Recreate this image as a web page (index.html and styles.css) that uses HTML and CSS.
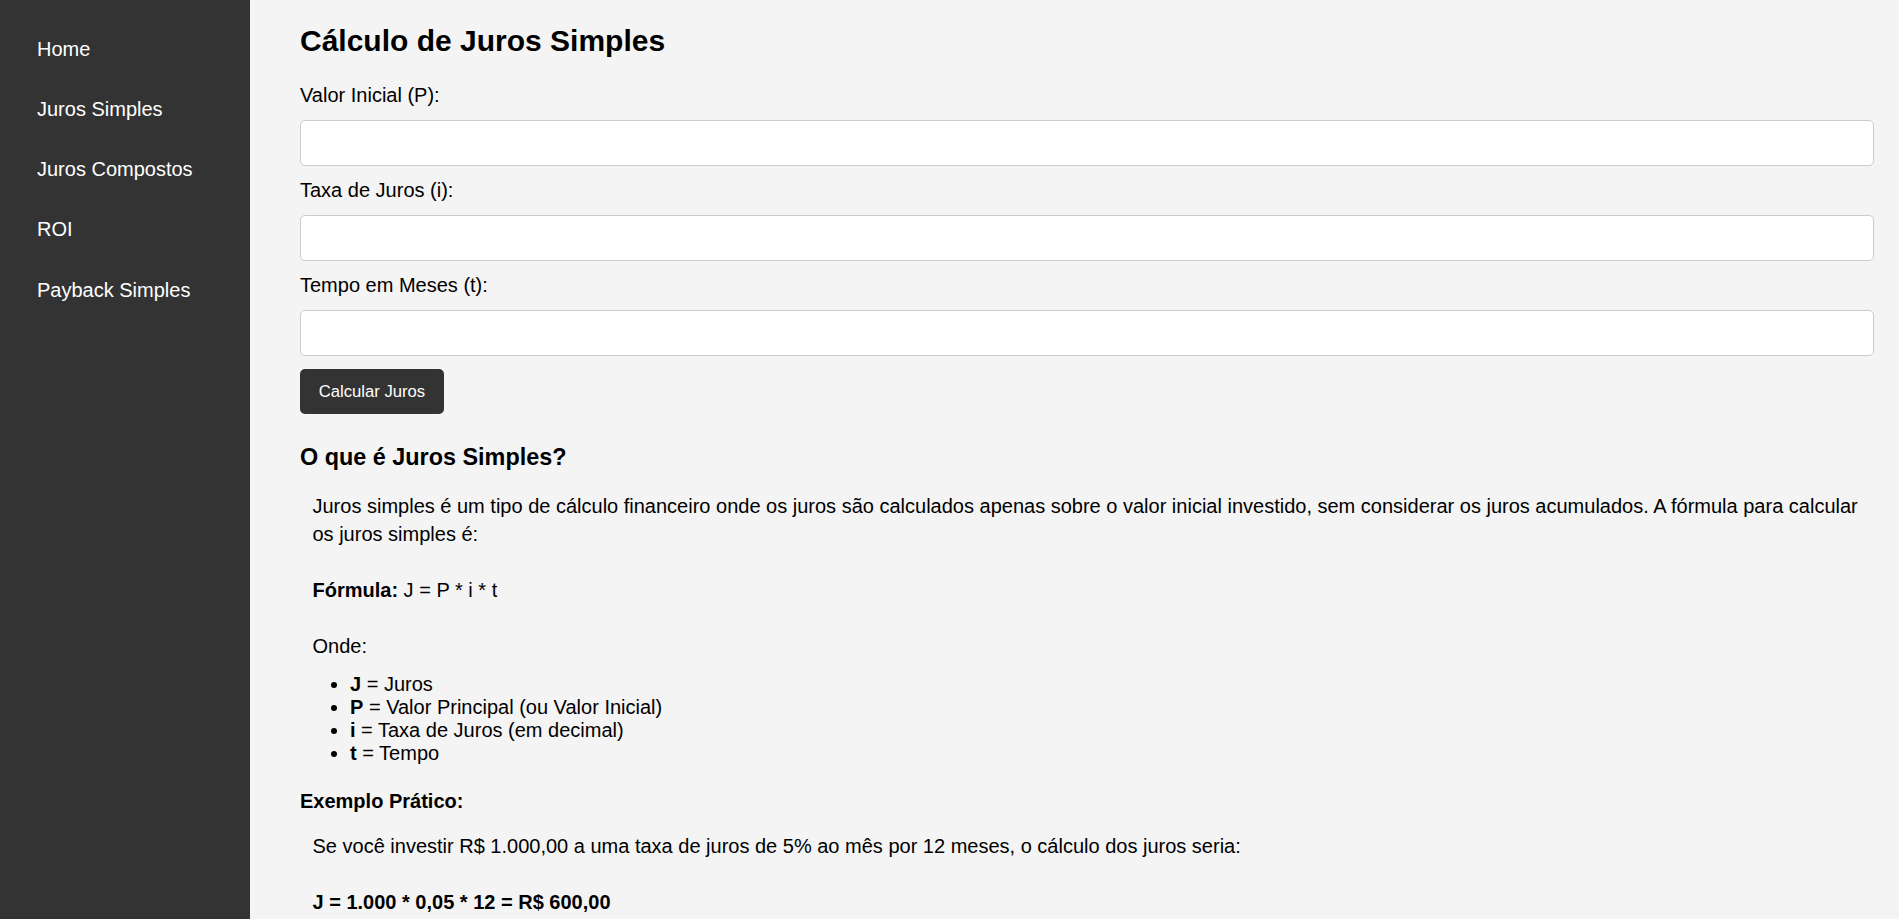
FILE: index.html
```html
<!DOCTYPE html>
<html lang="pt-BR">
<head>
<meta charset="UTF-8">
<title>Cálculo de Juros Simples</title>
<link rel="stylesheet" href="styles.css">
</head>
<body>
<nav class="sidebar">
  <ul class="nav-list">
    <li class="nav-item"><a class="nav-link" href="#">Home</a></li>
    <li class="nav-item"><a class="nav-link" href="#">Juros Simples</a></li>
    <li class="nav-item"><a class="nav-link" href="#">Juros Compostos</a></li>
    <li class="nav-item"><a class="nav-link" href="#">ROI</a></li>
    <li class="nav-item"><a class="nav-link" href="#">Payback Simples</a></li>
  </ul>
</nav>
<main class="content">
  <h1 class="title">Cálculo de Juros Simples</h1>
  <form class="calc-form">
    <label class="field-label" for="valor">Valor Inicial (P):</label>
    <input class="field-input" id="valor" type="number">
    <label class="field-label" for="taxa">Taxa de Juros (i):</label>
    <input class="field-input" id="taxa" type="number">
    <label class="field-label" for="tempo">Tempo em Meses (t):</label>
    <input class="field-input" id="tempo" type="number">
    <button class="calc-btn" type="button">Calcular Juros</button>
  </form>
  <section class="explain">
    <h3 class="explain-title">O que é Juros Simples?</h3>
    <p class="explain-text">Juros simples é um tipo de cálculo financeiro onde os juros são calculados apenas sobre o valor inicial investido, sem considerar os juros acumulados. A fórmula para calcular os juros simples é:<br><br><strong>Fórmula:</strong> J = P * i * t<br><br>Onde:</p>
    <ul class="explain-list">
      <li><strong>J</strong> = Juros</li>
      <li><strong>P</strong> = Valor Principal (ou Valor Inicial)</li>
      <li><strong>i</strong> = Taxa de Juros (em decimal)</li>
      <li><strong>t</strong> = Tempo</li>
    </ul>
    <h4 class="explain-sub">Exemplo Prático:</h4>
    <p class="explain-text">Se você investir R$ 1.000,00 a uma taxa de juros de 5% ao mês por 12 meses, o cálculo dos juros seria:<br><br><strong>J = 1.000 * 0,05 * 12 = R$ 600,00</strong></p>
  </section>
</main>
</body>
</html>
```

FILE: styles.css
```css
html, body {
  margin: 0;
  padding: 0;
}

body {
  display: flex;
  min-height: 100vh;
  font-family: "Liberation Sans", Arial, sans-serif;
  background-color: #f4f4f4;
  color: #000;
}

.sidebar {
  flex: 0 0 250px;
  width: 250px;
  background-color: #333;
  padding: 25px 25px 0 25px;
  box-sizing: border-box;
}

.nav-list {
  list-style: none;
  margin: 0;
  padding: 0;
}

.nav-item {
  margin: 0 0 12.25px 0;
}

.nav-link {
  display: block;
  padding: 12.5px 12px;
  color: #fff;
  text-decoration: none;
  font-size: 20px;
  line-height: 23px;
}

.content {
  flex: 1 1 auto;
  min-width: 0;
  padding: 24px 25px 0 50px;
}

.title {
  margin: 0 0 25px 0;
  font-size: 30px;
  line-height: 34.5px;
  font-weight: bold;
}

.calc-form {
  margin: 0;
}

.field-label {
  display: block;
  font-size: 20px;
  line-height: 23px;
  margin-bottom: 13px;
}

.field-input {
  display: block;
  width: 100%;
  height: 46px;
  box-sizing: border-box;
  margin: 0 0 13.3px 0;
  padding: 0 12.5px;
  border: 1px solid #ccc;
  border-radius: 5px;
  background-color: #fff;
  font-family: "Liberation Sans", Arial, sans-serif;
  font-size: 20px;
}

.calc-btn {
  display: block;
  padding: 12.5px 18.75px;
  border: none;
  border-radius: 5px;
  background-color: #333;
  color: #fff;
  font-family: "Liberation Sans", Arial, sans-serif;
  font-size: 16.67px;
  line-height: 19.2px;
  cursor: pointer;
}

.explain-title {
  margin: 30.5px 0 21px 0;
  font-size: 23.4px;
  line-height: 27px;
  font-weight: bold;
}

.explain-text {
  margin: 0;
  padding-left: 12.5px;
  font-size: 20px;
  line-height: 28px;
}

.explain-list {
  margin: 13px 0 0 0;
  padding-left: 50px;
  font-size: 20px;
  line-height: 23px;
}

.explain-sub {
  margin: 24.5px 0 19px 0;
  font-size: 20px;
  line-height: 23px;
  font-weight: bold;
}
```
